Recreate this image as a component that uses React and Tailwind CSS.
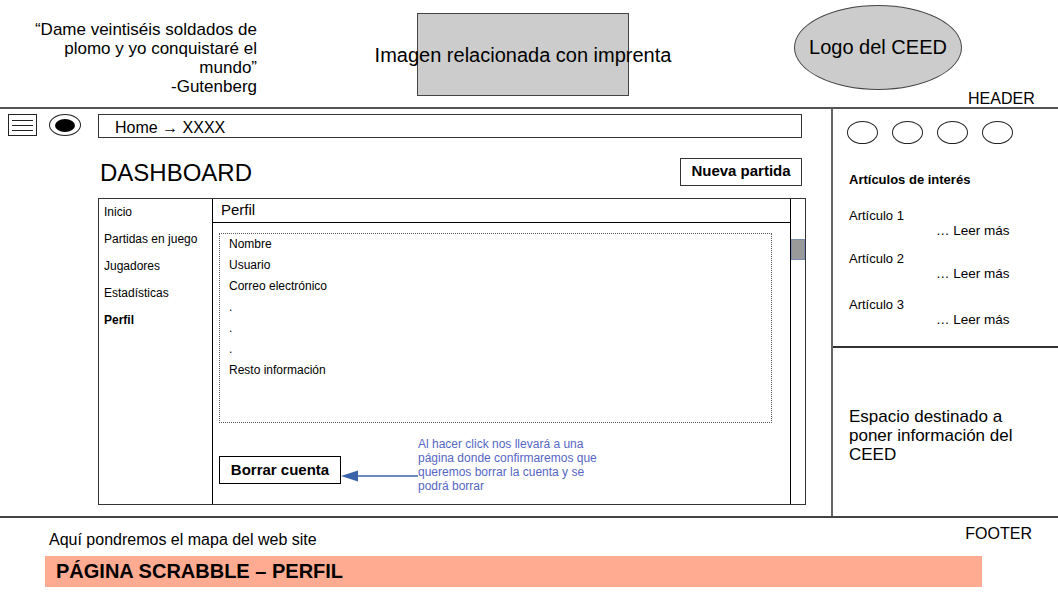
import React from "react";

const navItems = ["Inicio", "Partidas en juego", "Jugadores", "Estadísticas", "Perfil"];
const profileRows = ["Nombre", "Usuario", "Correo electrónico", ".", ".", ".", "Resto información"];
const articles = [
  { name: "Artículo 1", mt: "mt-[20px]" },
  { name: "Artículo 2", mt: "mt-[12px]" },
  { name: "Artículo 3", mt: "mt-[15px]" },
];

function Hamburger() {
  return (
    <div className="w-[29px] h-[22px] border border-[#222] flex flex-col justify-center gap-[4px] px-[3px]">
      <div className="h-px bg-[#222]" />
      <div className="h-px bg-[#222]" />
      <div className="h-px bg-[#222]" />
    </div>
  );
}

function Eye() {
  return (
    <div className="w-[32px] h-[22px] rounded-[50%] border border-[#222] flex items-center justify-center">
      <div className="w-[20px] h-[13px] rounded-[50%] bg-black" />
    </div>
  );
}

function Arrow() {
  return (
    <svg width="77" height="12" viewBox="0 0 77 12" className="mt-[34px]">
      <line x1="14" y1="6" x2="77" y2="6" stroke="#3b64a8" strokeWidth="1.3" />
      <polygon points="0,6 17,0.5 17,11.5" fill="#3b64a8" />
    </svg>
  );
}

export default function App() {
  return (
    <div className="w-[1058px] h-[595px] bg-white text-black overflow-hidden font-['Liberation_Sans',Arial,sans-serif]">
      {/* header */}
      <div className="h-[109px] flex items-start border-b-2 border-[#555]">
        <div className="w-[257px] pt-[20px] text-right text-[17px] leading-[19px]">
          <p>“Dame veintiséis soldados de</p>
          <p>plomo y yo conquistaré el</p>
          <p>mundo”</p>
          <p>-Gutenberg</p>
        </div>
        <div className="ml-[160px] mt-[13px] w-[212px] h-[83px] bg-[#cccccc] border border-[#444] flex items-center justify-center">
          <span className="whitespace-nowrap text-[20px] leading-none">Imagen relacionada con imprenta</span>
        </div>
        <div className="ml-[165px] mt-[5px] w-[168px] h-[85px] rounded-[50%] bg-[#cccccc] border border-[#444] flex items-center justify-center">
          <span className="text-[20px] leading-none -mt-[1px]">Logo del CEED</span>
        </div>
        <div className="ml-[6px] self-end text-[16px] leading-[17px]">HEADER</div>
      </div>

      {/* body */}
      <div className="h-[407px] flex">
        <div className="w-[833px] border-r-2 border-[#666]">
          <div className="flex items-start pt-[5px] pl-[8px]">
            <Hamburger />
            <div className="ml-[12px]">
              <Eye />
            </div>
            <div className="ml-[17px] w-[704px] h-[24px] border border-[#333] pl-[16px] text-[16px] leading-[25px]">
              Home → XXXX
            </div>
          </div>

          <div className="ml-[98px] w-[704px] mt-[19px] flex items-center justify-between">
            <h1 className="pl-[2px] text-[24px] leading-[27px] pt-[2px]">DASHBOARD</h1>
            <button className="w-[122px] h-[28px] border border-[#333] font-bold text-[15px]">Nueva partida</button>
          </div>

          <div className="ml-[98px] mt-[12px] w-[708px] h-[307px] border border-[#333] flex">
            <div className="w-[114px] border-r border-black pl-[5px] pt-[4px] flex flex-col gap-[9px] text-[12px] leading-[18px]">
              {navItems.map((item) => (
                <span key={item} className={item === "Perfil" ? "font-bold" : ""}>{item}</span>
              ))}
            </div>

            <div className="flex-1 flex flex-col">
              <div className="h-[24px] border-b border-black pl-[8px] text-[15px] leading-[22px]">Perfil</div>
              <div className="ml-[6px] mt-[10px] w-[553px] h-[190px] border border-dotted border-[#555] pl-[9px] text-[12px] leading-[21px]">
                {profileRows.map((row, i) => (
                  <p key={i}>{row}</p>
                ))}
              </div>
              <div className="ml-[6px] mt-[13px] flex items-start">
                <button className="mt-[20px] w-[122px] h-[28px] border border-black font-bold text-[15px]">Borrar cuenta</button>
                <Arrow />
                <p className="mt-[1px] w-[190px] text-[12px] leading-[14px] text-[#5566c4]">
                  Al hacer click nos llevará a una página donde confirmaremos que queremos borrar la cuenta y se podrá borrar
                </p>
              </div>
            </div>

            <div className="w-[15px] border-l border-black pt-[40px]">
              <div className="h-[21px] bg-[#999999] border border-[#7a8db0]" />
            </div>
          </div>
        </div>

        <div className="flex-1 flex flex-col">
          <div className="h-[239px] border-b-2 border-[#333] pl-[14px] pt-[12px]">
            <div className="flex gap-[14px]">
              {[0, 1, 2, 3].map((i) => (
                <div key={i} className="w-[31px] h-[23px] rounded-[50%] border border-[#222]" />
              ))}
            </div>
            <div className="pl-[2px] mt-[28px] text-[13px] leading-[16px]">
              <p className="font-bold">Artículos de interés</p>
              {articles.map((a) => (
                <div key={a.name} className={a.mt}>
                  <p>{a.name}</p>
                  <p className="pl-[87px] -mt-[1px] text-[13.5px]">… Leer más</p>
                </div>
              ))}
            </div>
          </div>
          <div className="flex-1 flex items-center pl-[16px]">
            <p className="w-[185px] text-[17px] leading-[19px] mt-[6px]">Espacio destinado a poner información del CEED</p>
          </div>
        </div>
      </div>

      {/* footer */}
      <div className="border-t-2 border-[#444] h-[79px]">
        <div className="flex items-start justify-between pl-[49px] pr-[26px]">
          <p className="mt-[13px] text-[16px] leading-[17px]">Aquí pondremos el mapa del web site</p>
          <p className="mt-[7px] text-[16px] leading-[17px]">FOOTER</p>
        </div>
        <div className="ml-[45px] mt-[8px] w-[937px] h-[31px] bg-[#ffab92] pl-[11px] font-bold text-[20px] leading-[31px]">
          PÁGINA SCRABBLE – PERFIL
        </div>
      </div>
    </div>
  );
}
